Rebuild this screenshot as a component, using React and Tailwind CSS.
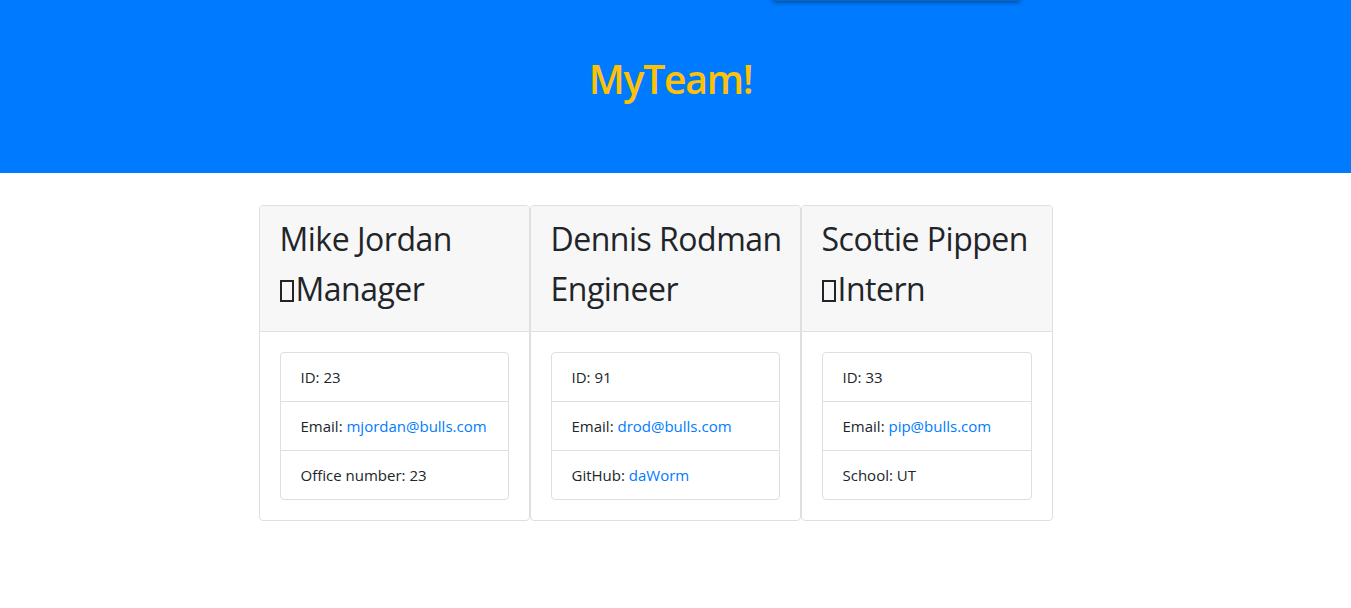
import React from "react";

const font = { fontFamily: '"Open Sans", "Noto Sans", sans-serif' };

function Tofu() {
  return (
    <span className="inline-block w-[14px] h-[22px] border-2 border-[#212529] mr-[2px] align-[-1px]" />
  );
}

function Card({ name, role, tofu, width, id, email, extraLabel, extraValue, extraLink }) {
  return (
    <div className={`${width} border border-[#dfdfdf] rounded-[4px] bg-white flex flex-col`}>
      <div className="bg-[#f7f7f7] border-b border-[#dfdfdf] px-5 pt-[8px] pb-[17px] rounded-t-[3px]">
        <h2 className="text-[32px] leading-[50px] font-medium text-[#212529] whitespace-nowrap tracking-[-0.5px]">
          <div>{name}</div>
          <div>
            {tofu && <Tofu />}
            {role}
          </div>
        </h2>
      </div>
      <div className="p-5">
        <ul className="border border-[#dfdfdf] rounded-[4px] text-[15px] text-[#212529]">
          <li className="px-5 h-[49px] flex items-center border-b border-[#dfdfdf]">ID: {id}</li>
          <li className="px-5 h-[49px] flex items-center border-b border-[#dfdfdf] whitespace-nowrap">
            Email:&nbsp;<a className="text-[#007bff]" href="#">{email}</a>
          </li>
          <li className="px-5 h-[48px] flex items-center whitespace-nowrap">
            {extraLabel}&nbsp;
            {extraLink ? <a className="text-[#007bff]" href="#">{extraValue}</a> : extraValue}
          </li>
        </ul>
      </div>
    </div>
  );
}

export default function App() {
  return (
    <div className="min-h-[608px] bg-white relative overflow-hidden" style={font}>
      <div className="absolute left-[773px] top-[-20px] w-[247px] h-[21px] bg-[#0a66c8] shadow-[0_1px_5px_rgba(0,0,0,0.45)]" />
      <header className="h-[173px] bg-[#007bff] flex justify-center pt-[55px] pr-[10px]">
        <h1 className="text-[39px] leading-[48px] font-semibold text-[#ffc107] tracking-[-1.2px]">MyTeam!</h1>
      </header>
      <main className="flex justify-center pr-[40px] pt-[32px]">
        <Card
          width="w-[271px]"
          name="Mike Jordan"
          role="Manager"
          tofu
          id="23"
          email="mjordan@bulls.com"
          extraLabel="Office number:"
          extraValue="23"
        />
        <Card
          width="w-[271px]"
          name="Dennis Rodman"
          role="Engineer"
          id="91"
          email="drod@bulls.com"
          extraLabel="GitHub:"
          extraValue="daWorm"
          extraLink
        />
        <Card
          width="w-[252px]"
          name="Scottie Pippen"
          role="Intern"
          tofu
          id="33"
          email="pip@bulls.com"
          extraLabel="School:"
          extraValue="UT"
        />
      </main>
    </div>
  );
}
